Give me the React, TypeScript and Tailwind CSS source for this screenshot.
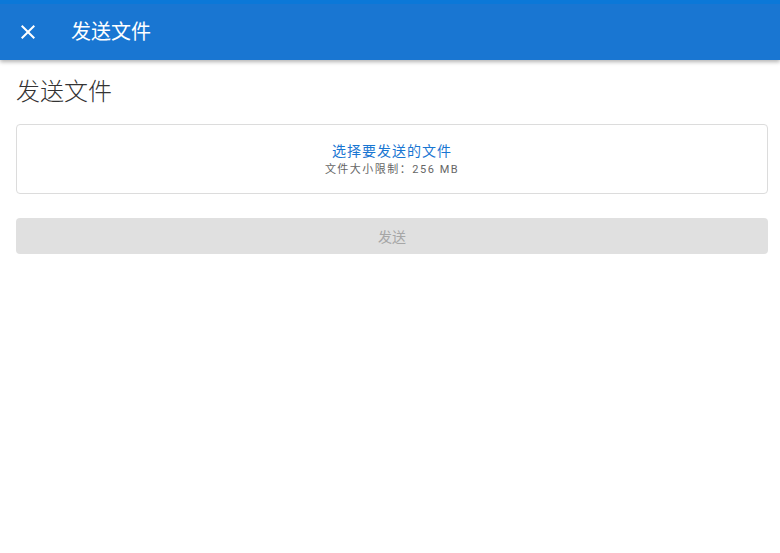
import React from "react";

export default function App() {
  return (
    <div
      className="min-h-[553px] w-[780px] bg-white"
      style={{ fontFamily: '"Roboto", "Noto Sans CJK SC", sans-serif' }}
    >
      <div className="relative z-10 shadow-[0_2px_4px_rgba(0,0,0,0.3)]">
        <div className="h-[4px] bg-[#0b78d8]" />
        <div className="flex h-[56px] items-center bg-[#1976d2] text-white">
          <div className="flex w-[56px] items-center justify-center">
            <svg width="24" height="24" viewBox="0 0 24 24">
              <path
                d="M19 6.41 17.59 5 12 10.59 6.41 5 5 6.41 10.59 12 5 17.59 6.41 19 12 13.41 17.59 19 19 17.59 13.41 12z"
                fill="white"
              />
            </svg>
          </div>
          <div className="ml-[15px] text-[20px] leading-none">发送文件</div>
        </div>
      </div>
      <div className="pl-[16px] pr-[12px]">
        <h1 className="mt-[16px] text-[24px] font-light leading-[32px] text-[#333]">发送文件</h1>
        <div className="mt-[16px] flex h-[70px] flex-col items-center justify-center rounded-[4px] border border-[#dcdcdc] pt-[1px]">
          <div className="text-[14px] leading-[19px] tracking-[1px] text-[#1976d2]">选择要发送的文件</div>
          <div className="mt-[1px] text-[11px] leading-[16px] tracking-[1.5px] text-[#666]">文件大小限制：256 MB</div>
        </div>
        <div className="mt-[24px] flex h-[36px] items-center justify-center rounded-[4px] bg-[#e0e0e0] pt-[2px] text-[14px] text-[#a6a6a6]">
          发送
        </div>
      </div>
    </div>
  );
}
